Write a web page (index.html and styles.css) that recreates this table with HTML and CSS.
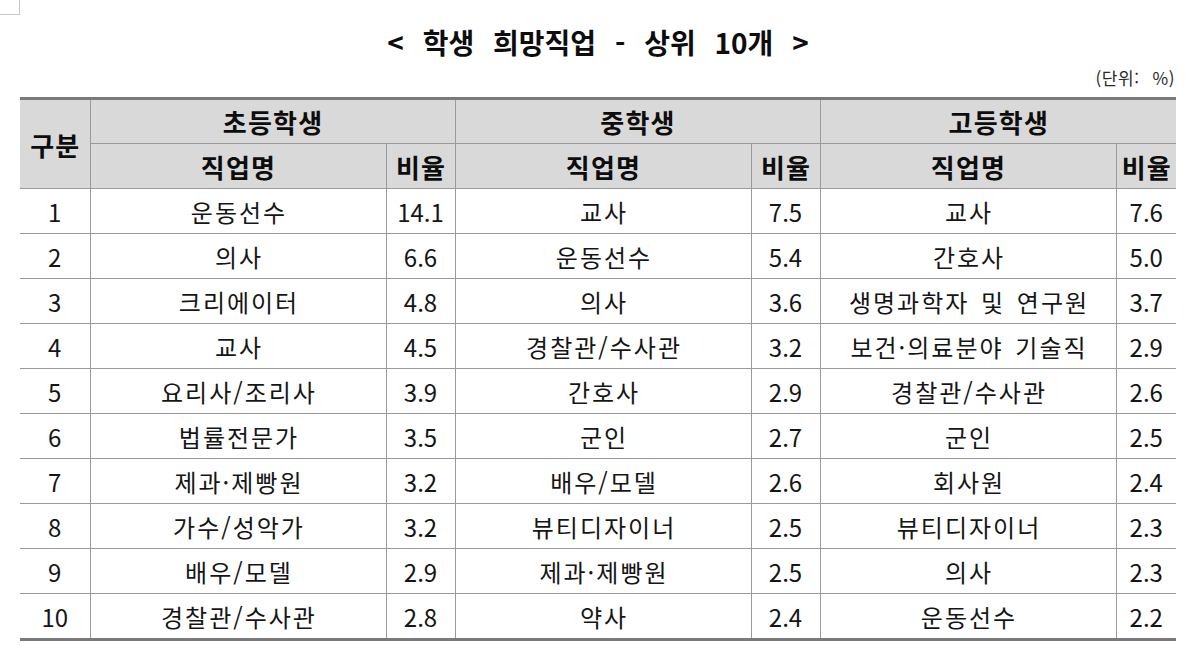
FILE: index.html
```html
<!DOCTYPE html>
<html lang="ko">
<head>
<meta charset="utf-8">
<link rel="stylesheet" href="styles.css">
</head>
<body>
<div class="corner"></div>
<div class="page">
  <h1 class="title">&lt; 학생 희망직업 - 상위 10개 &gt;</h1>
  <div class="unit">(단위: &nbsp;%)</div>
  <table class="jobs">
    <colgroup>
      <col class="c-rank"><col class="c-name"><col class="c-rate">
      <col class="c-name"><col class="c-rate">
      <col class="c-name"><col class="c-rate-last">
    </colgroup>
    <thead>
      <tr class="h1">
        <th rowspan="2" class="first">구분</th>
        <th colspan="2">초등학생</th>
        <th colspan="2">중학생</th>
        <th colspan="2" class="last">고등학생</th>
      </tr>
      <tr class="h2">
        <th>직업명</th><th>비율</th>
        <th>직업명</th><th>비율</th>
        <th>직업명</th><th class="last">비율</th>
      </tr>
    </thead>
    <tbody>
      <tr><td class="first">1</td><td>운동선수</td><td>14.1</td><td>교사</td><td>7.5</td><td>교사</td><td class="last">7.6</td></tr>
      <tr><td class="first">2</td><td>의사</td><td>6.6</td><td>운동선수</td><td>5.4</td><td>간호사</td><td class="last">5.0</td></tr>
      <tr><td class="first">3</td><td>크리에이터</td><td>4.8</td><td>의사</td><td>3.6</td><td>생명과학자 및 연구원</td><td class="last">3.7</td></tr>
      <tr><td class="first">4</td><td>교사</td><td>4.5</td><td>경찰관/수사관</td><td>3.2</td><td>보건·의료분야 기술직</td><td class="last">2.9</td></tr>
      <tr><td class="first">5</td><td>요리사/조리사</td><td>3.9</td><td>간호사</td><td>2.9</td><td>경찰관/수사관</td><td class="last">2.6</td></tr>
      <tr><td class="first">6</td><td>법률전문가</td><td>3.5</td><td>군인</td><td>2.7</td><td>군인</td><td class="last">2.5</td></tr>
      <tr><td class="first">7</td><td>제과·제빵원</td><td>3.2</td><td>배우/모델</td><td>2.6</td><td>회사원</td><td class="last">2.4</td></tr>
      <tr><td class="first">8</td><td>가수/성악가</td><td>3.2</td><td>뷰티디자이너</td><td>2.5</td><td>뷰티디자이너</td><td class="last">2.3</td></tr>
      <tr><td class="first">9</td><td>배우/모델</td><td>2.9</td><td>제과·제빵원</td><td>2.5</td><td>의사</td><td class="last">2.3</td></tr>
      <tr><td class="first">10</td><td>경찰관/수사관</td><td>2.8</td><td>약사</td><td>2.4</td><td>운동선수</td><td class="last">2.2</td></tr>
    </tbody>
  </table>
</div>
</body>
</html>
```

FILE: styles.css
```css
html, body {
  margin: 0;
  padding: 0;
  background: #ffffff;
}
body {
  font-family: "Noto Sans CJK KR", "Noto Sans", sans-serif;
  color: #151515;
  width: 1200px;
  height: 669px;
  overflow: hidden;
  position: relative;
}
.corner {
  position: absolute;
  left: 0;
  top: 0;
  width: 19px;
  height: 14px;
  border-right: 1px solid #c8c8c8;
  border-bottom: 1px solid #c8c8c8;
}
.page {
  padding: 0 24px 0 20px;
}
.title {
  margin: 0;
  padding-top: 22px;
  height: 42px;
  font-size: 28px;
  font-weight: 700;
  line-height: 40px;
  text-align: center;
  word-spacing: 11px;
  color: #0d0d0d;
}
.unit {
  text-align: right;
  font-size: 17px;
  line-height: 22px;
  height: 30px;
  padding-top: 3px;
  padding-right: 1px;
  letter-spacing: 0.6px;
  word-spacing: 1px;
  color: #2a2a2a;
}
.jobs {
  width: 1156px;
  border-collapse: collapse;
  table-layout: fixed;
  border-top: 3px solid #7a7a7a;
  border-bottom: 3px solid #7a7a7a;
}
.c-rank { width: 70px; }
.c-name { width: 296px; }
.c-rate { width: 69px; }
.c-rate-last { width: 60px; }
.jobs th, .jobs td {
  border: 1px solid #9a9a9a;
  padding: 0;
  text-align: center;
  vertical-align: middle;
  white-space: nowrap;
}
.jobs th.first, .jobs td.first { border-left: none; }
.jobs th.last, .jobs td.last { border-right: none; }
.jobs th {
  background: #d9d9d9;
  font-size: 26px;
  font-weight: 700;
  letter-spacing: 1.2px;
  padding-left: 1px;
  color: #0d0d0d;
}
.h1 th { height: 43px; }
.h2 th { height: 44px; }
.jobs td {
  height: 44px;
  font-size: 24px;
  font-weight: 400;
  letter-spacing: 0;
  color: #151515;
}
.jobs td:nth-child(even) {
  letter-spacing: 2px;
  word-spacing: 3px;
  padding-left: 2px;
}
.jobs tbody tr:last-child td { border-bottom: none; }
```
